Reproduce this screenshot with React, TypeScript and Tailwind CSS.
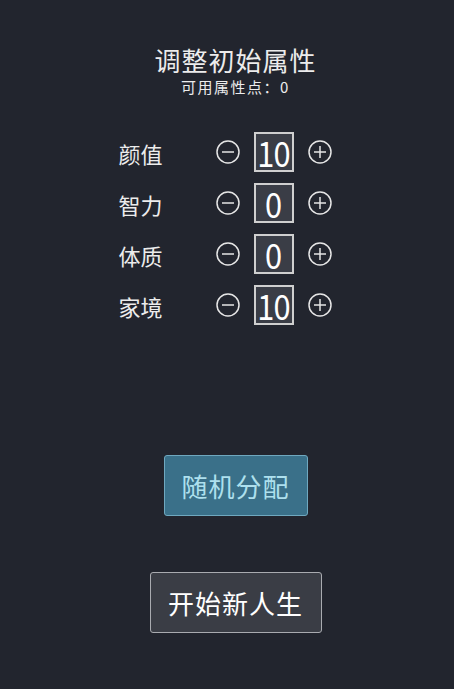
import { useState } from 'react';

type Attr = { key: string; label: string; value: number };

const initialAttrs: Attr[] = [
  { key: 'looks', label: '颜值', value: 10 },
  { key: 'intel', label: '智力', value: 0 },
  { key: 'body', label: '体质', value: 0 },
  { key: 'family', label: '家境', value: 10 },
];

const font = { fontFamily: '"Noto Sans CJK SC", "Noto Sans", sans-serif' };

function MinusIcon() {
  return (
    <svg width="24" height="24" viewBox="0 0 24 24" fill="none" stroke="#e6e6e6" strokeWidth="1.5">
      <circle cx="12" cy="12" r="11" />
      <line x1="6" y1="12" x2="18" y2="12" />
    </svg>
  );
}

function PlusIcon() {
  return (
    <svg width="24" height="24" viewBox="0 0 24 24" fill="none" stroke="#e6e6e6" strokeWidth="1.5">
      <circle cx="12" cy="12" r="11" />
      <line x1="6" y1="12" x2="18" y2="12" />
      <line x1="12" y1="6" x2="12" y2="18" />
    </svg>
  );
}

export default function App() {
  const [attrs, setAttrs] = useState<Attr[]>(initialAttrs);
  const total = 20;
  const left = total - attrs.reduce((s, a) => s + a.value, 0);

  const change = (key: string, d: number) => {
    setAttrs(prev =>
      prev.map(a => {
        if (a.key !== key) return a;
        const v = a.value + d;
        if (v < 0 || v > 10 || (d > 0 && left <= 0)) return a;
        return { ...a, value: v };
      })
    );
  };

  return (
    <div className="min-h-screen w-full bg-[#22252e] text-[#ececec] flex flex-col items-center" style={font}>
      {/* Header */}
      <h1 className="ml-[17px] mt-[47px] text-[26px] leading-[26px] tracking-[1px]">调整初始属性</h1>
      <p className="ml-[17px] mt-[6px] text-[15px] leading-[15px] tracking-[1.5px]">可用属性点：{left}</p>

      {/* Attributes */}
      <div className="mr-[4px] mt-[38px] flex flex-col gap-[11px]">
        {attrs.map(a => (
          <div key={a.key} className="flex items-center h-10">
            <span className="w-[97px] text-[22px] leading-none translate-y-[1px]">{a.label}</span>
            <button onClick={() => change(a.key, -1)} className="w-6 h-6 flex items-center justify-center">
              <MinusIcon />
            </button>
            <div className="ml-[14px] mr-[14px] w-10 h-10 border-2 border-[#cfcfcf] bg-[#3a3d46] flex items-center justify-center text-white">
              <span className="inline-block text-[35px] leading-[34px] tracking-[-1px] scale-x-[0.88]">{a.value}</span>
            </div>
            <button onClick={() => change(a.key, 1)} className="w-6 h-6 flex items-center justify-center">
              <PlusIcon />
            </button>
          </div>
        ))}
      </div>

      {/* Actions */}
      <button className="ml-[17px] mt-[130px] w-[144px] h-[61px] rounded-[3px] border border-[#6fa8bf] bg-[#3a7089] text-[#aee0ee] text-[26px] leading-none tracking-[1px]">
        随机分配
      </button>
      <button className="ml-[17px] mt-[56px] w-[172px] h-[61px] rounded-[3px] border border-[#a9abb0] bg-[#3a3d45] text-white text-[26px] leading-none tracking-[1px]">
        开始新人生
      </button>
    </div>
  );
}
